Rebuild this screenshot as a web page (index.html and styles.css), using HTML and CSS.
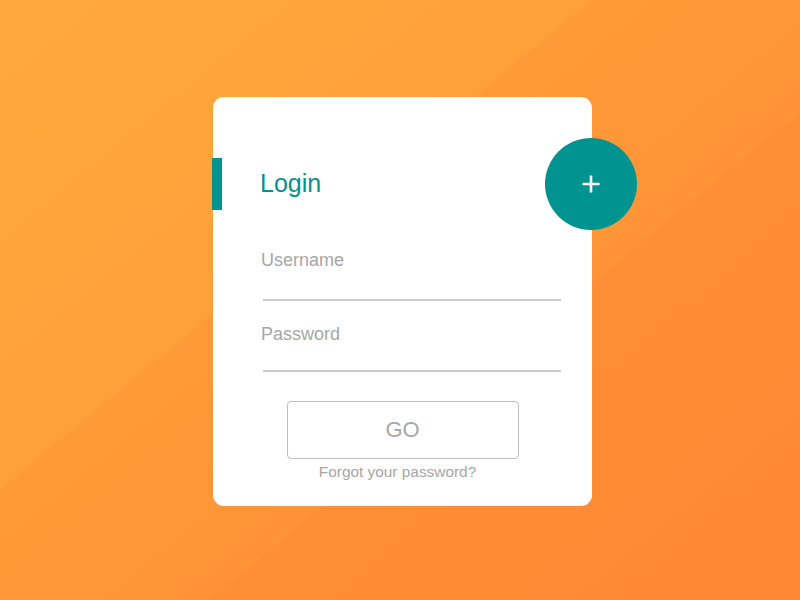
FILE: index.html
```html
<!DOCTYPE html>
<html lang="en">
<head>
<meta charset="utf-8">
<title>Login</title>
<link rel="stylesheet" href="styles.css">
</head>
<body>
  <div class="card">
    <button class="fab" type="button" aria-label="Add">
      <svg width="18" height="18" viewBox="0 0 18 18" aria-hidden="true">
        <path d="M9 0.5V17.5M0.5 9H17.5" stroke="#fff" stroke-width="2.6" fill="none"/>
      </svg>
    </button>
    <div class="title-row">
      <span class="title-bar"></span>
      <h1 class="title">Login</h1>
    </div>
    <div class="field field-user">
      <label class="label" for="user">Username</label>
      <input class="input input-user" id="user" type="text">
    </div>
    <div class="field field-pass">
      <label class="label" for="pass">Password</label>
      <input class="input input-pass" id="pass" type="password">
    </div>
    <button class="go" type="button">GO</button>
    <a class="forgot" href="#">Forgot your password?</a>
  </div>
</body>
</html>
```
FILE: styles.css
```css
* { box-sizing: border-box; }

html, body { margin: 0; height: 100%; }

body {
  font-family: "Liberation Sans", Arial, sans-serif;
  display: flex;
  justify-content: center;
  align-items: center;
  padding: 3px 0 0 5px;
  background: linear-gradient(140.4deg,
    #ffa93c 0%, #ffa03b 38.8%,
    #fe9b39 38.8%, #fe9437 61.3%,
    #ff8e36 61.3%, #ff8835 100%);
}

.card {
  position: relative;
  width: 379px;
  background: #fff;
  border-radius: 11px;
  padding: 61px 0 26px 0;
  display: flex;
  flex-direction: column;
}

.fab {
  position: absolute;
  left: 332px;
  top: 41px;
  width: 92px;
  height: 92px;
  border-radius: 50%;
  border: none;
  padding: 0;
  background: #01938f;
  display: flex;
  align-items: center;
  justify-content: center;
}

.title-row {
  height: 52px;
  display: flex;
  align-items: center;
}

.title-bar {
  width: 10px;
  height: 52px;
  margin-left: -1px;
  background: #01938f;
}

.title {
  margin: 0 0 3px 38px;
  font-size: 25px;
  font-weight: 400;
  color: #01938f;
  line-height: 30px;
}

.field {
  margin: 0 31px 0 48px;
  display: flex;
  flex-direction: column;
}

.field-user { margin-top: 40px; }
.field-pass { margin-top: 23px; }

.label {
  font-size: 18px;
  line-height: 20px;
  color: #a6a6a6;
}

.input {
  margin-left: 2px;
  border: none;
  border-bottom: 2px solid #cbcbcb;
  background: transparent;
  outline: none;
  padding: 0;
  font: inherit;
}

.input-user { height: 31px; }
.input-pass { height: 28px; }

.go {
  margin: 29px auto 0;
  width: 232px;
  height: 58px;
  background: #fff;
  border: 1px solid #bdbdbd;
  border-radius: 4px;
  font-family: inherit;
  font-size: 22px;
  color: #a8a8a8;
  padding: 0;
}

.forgot {
  margin-top: 4px;
  align-self: center;
  margin-right: 10px;
  font-size: 15.4px;
  line-height: 17px;
  color: #a6a6a6;
  text-decoration: none;
}
```
